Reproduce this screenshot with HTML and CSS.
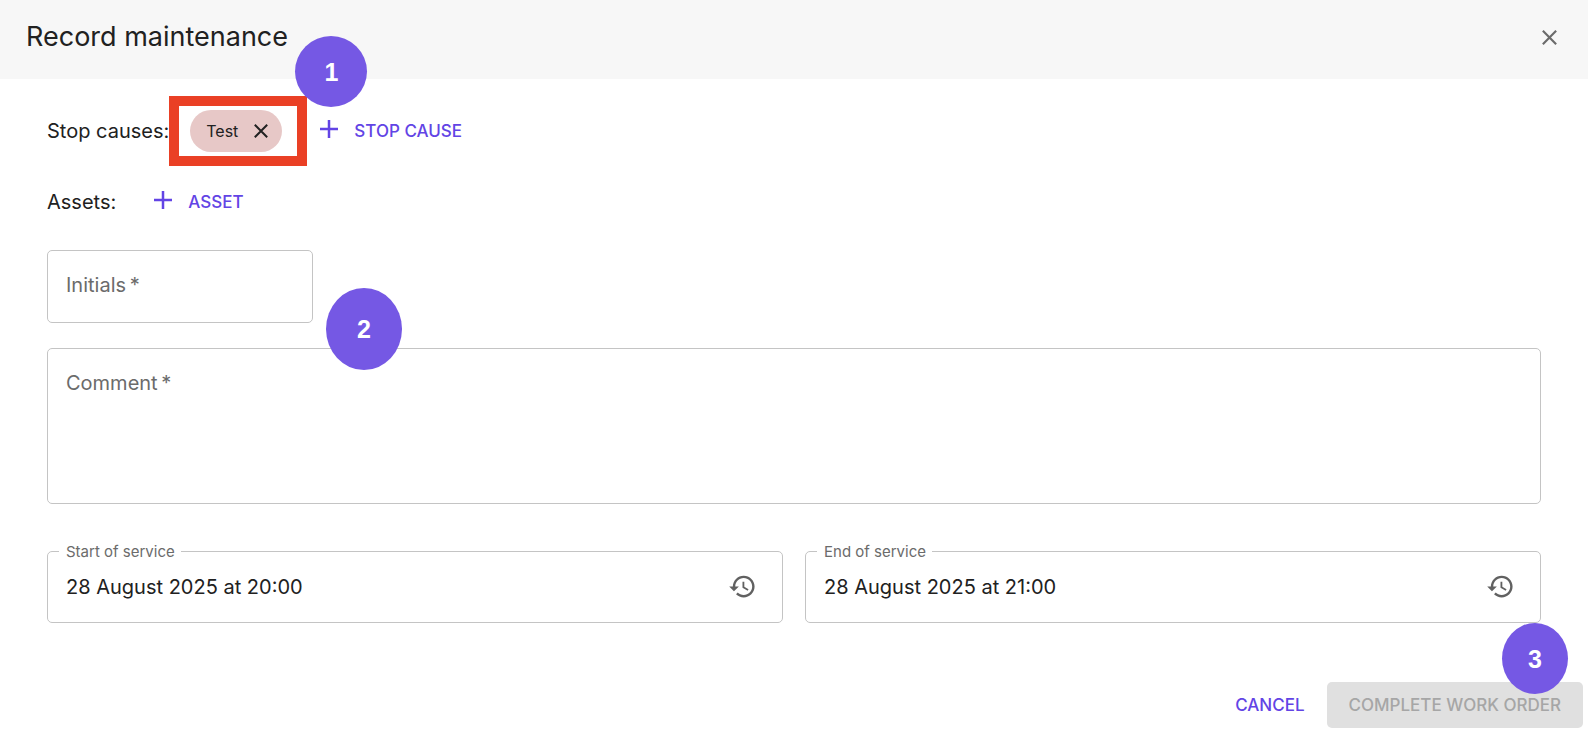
FILE: index.html
```html
<!DOCTYPE html>
<html lang="en">
<head>
<meta charset="utf-8">
<title>Record maintenance</title>
<meta name="viewport" content="width=device-width, initial-scale=1">
<link rel="stylesheet" href="styles.css">
</head>
<body>
<main class="dialog">
  <header class="dialog-header">
    <h1 class="dialog-title">Record maintenance</h1>
    <button class="icon-button" type="button" aria-label="Close">
      <svg class="icon-close" viewBox="0 0 14 14" aria-hidden="true"><path d="M0.8 0.8 13.2 13.2M13.2 0.8 0.8 13.2"/></svg>
    </button>
  </header>

  <form class="dialog-form">
    <div class="dialog-body">
      <div class="picker-row">
        <span class="picker-label">Stop causes:</span>
        <div class="highlight">
          <span class="chip">
            Test
            <button class="chip-remove" type="button" aria-label="Remove Test">
              <svg class="icon-close" viewBox="0 0 14 14" aria-hidden="true"><path d="M0.8 0.8 13.2 13.2M13.2 0.8 0.8 13.2"/></svg>
            </button>
          </span>
          <span class="step step-one">1</span>
        </div>
        <button class="add-button" type="button">
          <svg class="icon-plus" viewBox="0 0 18 18" aria-hidden="true"><path d="M9 0V18M0 9H18"/></svg>
          STOP CAUSE
        </button>
      </div>

      <div class="picker-row picker-row-assets">
        <span class="picker-label">Assets:</span>
        <button class="add-button add-asset" type="button">
          <svg class="icon-plus" viewBox="0 0 18 18" aria-hidden="true"><path d="M9 0V18M0 9H18"/></svg>
          ASSET
        </button>
      </div>

      <div class="field field-initials">
        <input class="input input-initials" id="initials" type="text" placeholder="Initials&#8201;*" aria-label="Initials" required>
        <span class="step step-two">2</span>
      </div>

      <div class="field field-comment">
        <textarea class="input textarea" id="comment" placeholder="Comment&#8201;*" aria-label="Comment" required></textarea>
      </div>

      <div class="service-row">
        <div class="field field-date">
          <label class="floating-label" for="start">Start of service</label>
          <input class="input input-date" id="start" type="text" value="28 August 2025 at 20:00">
          <button class="history-button" type="button" aria-label="Choose start of service">
            <svg class="icon-history" viewBox="0 0 24 24" aria-hidden="true"><path d="M13 3c-4.97 0-9 4.03-9 9H1l3.89 3.89.07.14L9 12H6c0-3.87 3.13-7 7-7s7 3.13 7 7-3.13 7-7 7c-1.93 0-3.68-.79-4.94-2.06l-1.42 1.42C8.27 19.99 10.51 21 13 21c4.97 0 9-4.03 9-9s-4.03-9-9-9zm-1 5v5l4.28 2.54.72-1.21-3.5-2.08V8H12z"/></svg>
          </button>
        </div>
        <div class="field field-date">
          <label class="floating-label" for="end">End of service</label>
          <input class="input input-date" id="end" type="text" value="28 August 2025 at 21:00">
          <button class="history-button" type="button" aria-label="Choose end of service">
            <svg class="icon-history" viewBox="0 0 24 24" aria-hidden="true"><path d="M13 3c-4.97 0-9 4.03-9 9H1l3.89 3.89.07.14L9 12H6c0-3.87 3.13-7 7-7s7 3.13 7 7-3.13 7-7 7c-1.93 0-3.68-.79-4.94-2.06l-1.42 1.42C8.27 19.99 10.51 21 13 21c4.97 0 9-4.03 9-9s-4.03-9-9-9zm-1 5v5l4.28 2.54.72-1.21-3.5-2.08V8H12z"/></svg>
          </button>
        </div>
      </div>
    </div>

    <footer class="dialog-actions">
      <button class="button button-text" type="button">CANCEL</button>
      <div class="submit-wrap">
        <button class="button button-submit" type="submit" disabled>COMPLETE WORK ORDER</button>
        <span class="step step-three">3</span>
      </div>
    </footer>
  </form>
</main>
</body>
</html>
```
FILE: styles.css
```css
* {
  box-sizing: border-box;
}

body {
  margin: 0;
  background: #fff;
  color: #212121;
  font-family: Inter, "Liberation Sans", sans-serif;
  font-size: 20px;
  line-height: 24px;
}

button,
input,
textarea {
  margin: 0;
  font: inherit;
}

button {
  padding: 0;
  border: 0;
  background: none;
  color: inherit;
  cursor: pointer;
}

.dialog-header {
  display: flex;
  align-items: center;
  justify-content: space-between;
  padding: 21px 31px 26px 26px;
  background: #f7f7f7;
}

.dialog-title {
  margin: 0;
  font-size: 27px;
  font-weight: 400;
  line-height: 32px;
}

.icon-button {
  display: flex;
  color: #6b6b6b;
}

.icon-close {
  width: 14px;
  height: 14px;
  fill: none;
  stroke: currentColor;
  stroke-width: 2;
}

.icon-button .icon-close {
  width: 15px;
  height: 15px;
}

.dialog-body {
  display: flex;
  flex-direction: column;
  align-items: stretch;
  padding: 17px 47px 0;
}

.picker-row {
  display: flex;
  align-items: center;
}

.picker-row-assets {
  margin: 24px 0 36px;
}

.highlight {
  position: relative;
  padding: 4px 15px 4px 11px;
  border: 10px solid #ea4025;
}

.chip {
  display: flex;
  align-items: center;
  gap: 16px;
  height: 42px;
  padding: 0 14px 0 16px;
  border-radius: 21px;
  background: #e7c8c7;
  font-size: 16px;
}

.chip-remove {
  display: flex;
}

.add-button {
  display: flex;
  align-items: center;
  gap: 16px;
  margin-left: 13px;
  color: #6244e5;
  font-size: 17px;
  font-weight: 500;
}

.add-asset {
  margin-left: 38px;
}

.icon-plus {
  width: 18px;
  height: 18px;
  margin-bottom: 4px;
  fill: none;
  stroke: currentColor;
  stroke-width: 2.5;
}

.field {
  position: relative;
}

.input {
  display: block;
  width: 100%;
  height: 73px;
  padding: 0 18px;
  border: 1px solid #c4c4c4;
  border-radius: 5px;
  outline: 0;
  background: #fff;
  color: inherit;
}

.input::placeholder {
  color: #6b6b6b;
  opacity: 1;
}

.field-initials {
  width: 266px;
}

.input-initials {
  padding-bottom: 3px;
}

.field-comment {
  margin-top: 25px;
}

.textarea {
  height: 156px;
  padding-top: 22px;
  resize: none;
}

.service-row {
  display: grid;
  grid-template-columns: 1fr 1fr;
  gap: 22px;
  margin-top: 47px;
}

.input-date {
  height: 72px;
  padding-right: 72px;
}

.floating-label {
  position: absolute;
  top: -8px;
  left: 12px;
  padding: 0 6px 0 7px;
  background: #fff;
  color: #6b6b6b;
  font-size: 15px;
  line-height: 18px;
}

.history-button {
  position: absolute;
  top: 21px;
  right: 26px;
  display: flex;
  color: #616161;
}

.icon-history {
  width: 29px;
  height: 29px;
  fill: currentColor;
}

.dialog-actions {
  display: flex;
  align-items: center;
  justify-content: flex-end;
  margin-top: 59px;
  padding: 0 5px 6px;
}

.button {
  height: 46px;
  padding: 0 22px;
  border-radius: 5px;
  font-size: 17px;
  font-weight: 500;
}

.button-text {
  color: #6244e5;
}

.submit-wrap {
  position: relative;
}

.button-submit {
  background: #e0e0e0;
  color: #a6a6a6;
  cursor: default;
}

.step {
  position: absolute;
  z-index: 1;
  display: flex;
  align-items: center;
  justify-content: center;
  border-radius: 50%;
  background: #7558e4;
  color: #fff;
  font-family: "Liberation Sans", Arial, sans-serif;
  font-size: 25px;
  font-weight: 700;
}

.step-one {
  top: -70px;
  right: -70px;
  width: 72px;
  height: 71px;
}

.step-two {
  top: 38px;
  left: 279px;
  width: 76px;
  height: 82px;
}

.step-three {
  top: -59px;
  right: 15px;
  width: 66px;
  height: 71px;
}
```
